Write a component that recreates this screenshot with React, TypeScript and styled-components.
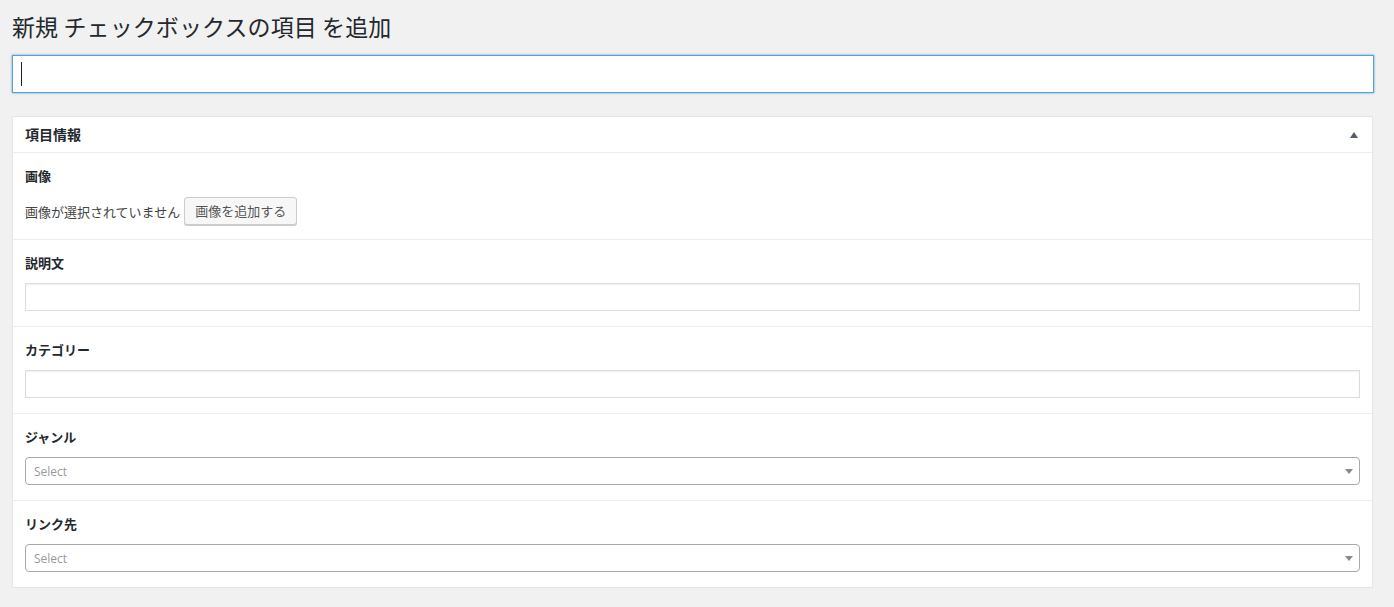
import React from 'react'
import styled, { createGlobalStyle } from 'styled-components'

const GlobalStyle = createGlobalStyle`
  html, body {
    margin: 0;
    padding: 0;
    background: #f1f1f1;
  }
  body {
    font-family: "Noto Sans CJK JP", "Noto Sans", sans-serif;
    color: #23282d;
    font-size: 13px;
  }
  * {
    box-sizing: border-box;
  }
`

type Field = {
  label: string
  kind: 'text' | 'select' | 'image'
}

const fields: Field[] = [
  { label: '画像', kind: 'image' },
  { label: '説明文', kind: 'text' },
  { label: 'カテゴリー', kind: 'text' },
  { label: 'ジャンル', kind: 'select' },
  { label: 'リンク先', kind: 'select' },
]

const App: React.FC = () => {
  return (
    <Wrap>
      <GlobalStyle />
      <Title>新規 チェックボックスの項目 を追加</Title>
      <TitleBox>
        <TitleInput type="text" />
        <Caret />
      </TitleBox>
      <Panel>
        <PanelHeader>
          <PanelTitle>項目情報</PanelTitle>
          <Toggle />
        </PanelHeader>
        {fields.map((f) => (
          <Section key={f.label}>
            <Label>{f.label}</Label>
            {f.kind === 'image' && (
              <ImageRow>
                <span>画像が選択されていません</span>
                <Button type="button">画像を追加する</Button>
              </ImageRow>
            )}
            {f.kind === 'text' && <TextInput type="text" />}
            {f.kind === 'select' && (
              <Select>
                <Placeholder>Select</Placeholder>
                <SelectArrow />
              </Select>
            )}
          </Section>
        ))}
      </Panel>
    </Wrap>
  )
}

const Wrap = styled.div`
  width: 1362px;
  margin-left: 12px;
  padding-top: 12px;
`

const Title = styled.h1`
  margin: 0;
  font-size: 23px;
  font-weight: 400;
  line-height: 28px;
  color: #23282d;
  height: 43px;
  letter-spacing: 0.1px;
`

const TitleBox = styled.div`
  position: relative;
  margin-bottom: 23px;
`

const TitleInput = styled.input`
  display: block;
  width: 100%;
  height: 38px;
  margin: 0;
  padding: 3px 8px;
  font-size: 20px;
  border: 1px solid #5b9dd9;
  box-shadow: 0 0 2px rgba(30, 140, 190, 0.8);
  background: #fff;
  outline: none;
`

const Caret = styled.span`
  position: absolute;
  left: 9px;
  top: 7px;
  width: 1px;
  height: 24px;
  background: #1e1e1e;
`

const Panel = styled.div`
  width: 1361px;
  background: #fff;
  border: 1px solid #e5e5e5;
  box-shadow: 0 1px 1px rgba(0, 0, 0, 0.04);
`

const PanelHeader = styled.div`
  display: flex;
  align-items: center;
  justify-content: space-between;
  height: 36px;
  padding: 0 12px;
  border-bottom: 1px solid #eee;
`

const PanelTitle = styled.h2`
  margin: 0;
  font-size: 14px;
  font-weight: 700;
  line-height: 1.4;
  color: #23282d;
`

const Toggle = styled.span`
  width: 0;
  height: 0;
  margin-right: 2px;
  border-left: 4px solid transparent;
  border-right: 4px solid transparent;
  border-bottom: 6px solid #555d66;
`

const Section = styled.div`
  padding: 13px 12px 15px;
  border-bottom: 1px solid #eee;

  &:last-child {
    border-bottom: none;
  }
`

const Label = styled.div`
  font-size: 13px;
  font-weight: 700;
  line-height: 19px;
  margin-bottom: 11px;
  color: #23282d;
`

const ImageRow = styled.div`
  display: flex;
  align-items: center;
  gap: 4px;
  font-size: 13px;
  color: #444;
  margin-top: 12px;
  margin-bottom: -1px;
`

const Button = styled.button`
  height: 28px;
  padding: 0 10px 1px;
  font-family: inherit;
  font-size: 13px;
  line-height: 26px;
  color: #555;
  background: #f7f7f7;
  border: 1px solid #ccc;
  border-radius: 3px;
  box-shadow: 0 1px 0 #ccc;
  cursor: pointer;
`

const TextInput = styled.input`
  display: block;
  width: 100%;
  height: 28px;
  margin: 0;
  padding: 3px 5px;
  border: 1px solid #ddd;
  box-shadow: inset 0 1px 2px rgba(0, 0, 0, 0.07);
  background: #fff;
  outline: none;
`

const Select = styled.div`
  position: relative;
  display: flex;
  align-items: center;
  height: 28px;
  padding: 0 8px;
  border: 1px solid #aaa;
  border-radius: 4px;
  background: #fff;
`

const Placeholder = styled.span`
  font-family: "Open Sans", "Noto Sans", sans-serif;
  font-size: 12px;
  color: #999;
`

const SelectArrow = styled.span`
  position: absolute;
  right: 6px;
  top: 11px;
  width: 0;
  height: 0;
  border-left: 4px solid transparent;
  border-right: 4px solid transparent;
  border-top: 5px solid #888;
`

export default App
